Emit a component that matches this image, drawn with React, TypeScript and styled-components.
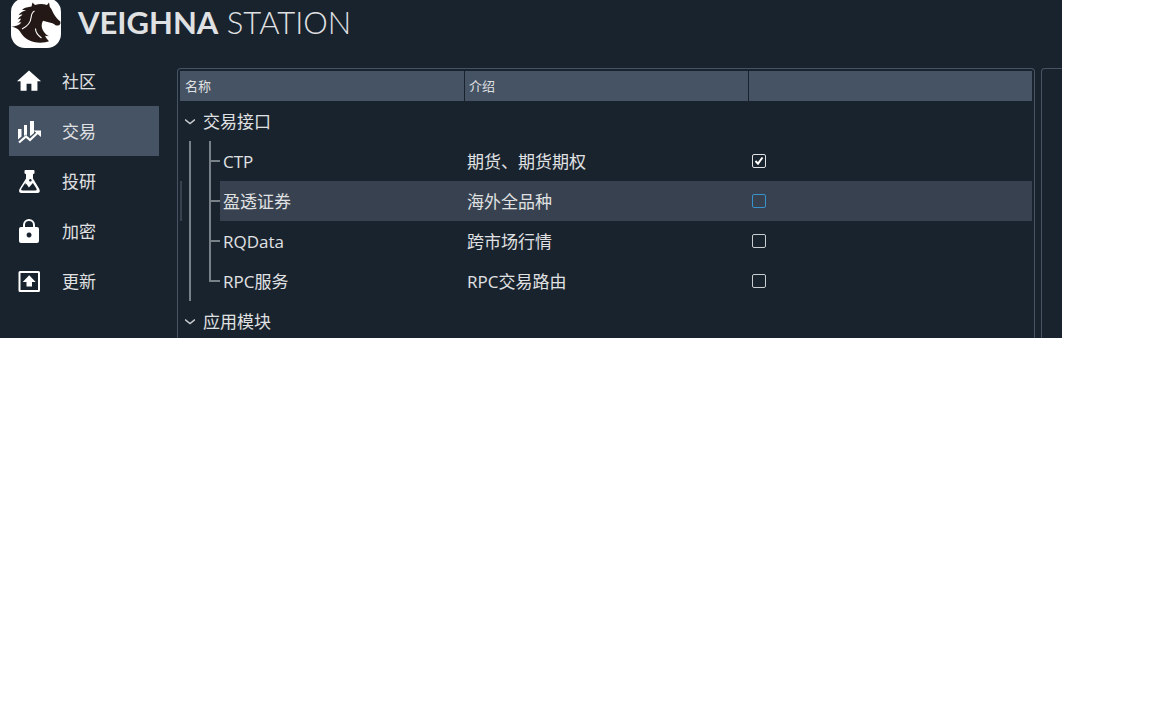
import React from 'react';
import styled, { createGlobalStyle, css } from 'styled-components';

const GlobalStyle = createGlobalStyle`
  body {
    margin: 0;
    background: #ffffff;
    color: #e0e1e3;
    font-family: "Open Sans", "Noto Sans CJK SC", sans-serif;
    font-size: 17px;
  }
`;

const Shell = styled.div`
  margin-right: 90px;
  background: #19232d;
`;

const Header = styled.header`
  display: flex;
  align-items: flex-start;
  gap: 17px;
  height: 56px;
  padding-left: 11px;
`;

const Logo = styled.svg`
  display: block;
  width: 50px;
  height: 48px;
`;

const Title = styled.h1`
  margin: 0;
  font-family: Lato, sans-serif;
  font-size: 31px;
  line-height: 44px;
  font-weight: 300;
  white-space: nowrap;
`;

const Strong = styled.span`
  font-weight: 700;
`;

const Body = styled.div`
  display: flex;
`;

const Sidebar = styled.nav`
  display: flex;
  flex: none;
  flex-direction: column;
  width: 150px;
  padding: 0 18px 0 9px;
`;

const NavButton = styled.button<{ $active?: boolean }>`
  display: flex;
  align-items: center;
  gap: 20px;
  height: 50px;
  padding: 0 7px;
  border: 0;
  background: ${(p) => (p.$active ? '#455364' : 'transparent')};
  color: inherit;
  font: inherit;
`;

const NavLabel = styled.span`
  padding-top: 2px;
  line-height: 24px;
`;

const NavIcon = styled.svg`
  flex: none;
  width: 26px;
  height: 26px;
  fill: #ffffff;
`;

const Panels = styled.main`
  display: flex;
  flex: 1;
  gap: 6px;
  min-width: 0;
  padding-top: 12px;
`;

const frame = css`
  border: 1px solid #455364;
  border-bottom: 0;
`;

const TreePanel = styled.section`
  ${frame}
  flex: 1;
  min-width: 0;
  padding: 2px 2px 0;
  border-radius: 4px 4px 0 0;
`;

const SidePanel = styled.aside`
  ${frame}
  flex: none;
  width: 20px;
  border-right: 0;
  border-radius: 4px 0 0 0;
`;

const Tree = styled.table`
  width: 100%;
  table-layout: fixed;
  border-collapse: separate;
  border-spacing: 0;
`;

const HeadCell = styled.th`
  height: 30px;
  padding: 0 5px;
  background: #455364;
  font-size: 13px;
  font-weight: inherit;
  line-height: 20px;
  text-align: left;

  & + & {
    padding: 0 4px;
    border-left: 1px solid #19232d;
  }
`;

const Row = styled.tr<{ $selected?: boolean }>`
  background: ${(p) => (p.$selected ? '#37414f' : 'transparent')};
`;

const Cell = styled.td`
  height: 38px;
  padding: 2px 3px 0;
  line-height: 24px;
  white-space: nowrap;
`;

const CheckCell = styled.td`
  padding: 0 4px;
`;

const NameCell = styled.td`
  padding: 0;
`;

const Node = styled.div`
  display: flex;
  align-items: center;
  height: 40px;
  background: #19232d;
`;

const NodeLabel = styled.span<{ $selected?: boolean }>`
  flex: 1;
  padding: 9px 3px 7px;
  line-height: 24px;
  background: ${(p) => (p.$selected ? '#37414f' : 'transparent')};
`;

const Branch = styled.svg`
  flex: none;
  width: 40px;
  height: 40px;
`;

const GroupCell = styled.td<{ $last?: boolean }>`
  height: ${(p) => (p.$last ? 32 : 39)}px;
  padding: ${(p) => (p.$last ? 5 : 1)}px 0 0;
  vertical-align: middle;
`;

const GroupButton = styled.button`
  display: flex;
  align-items: center;
  gap: 8px;
  padding: 0 5px;
  border: 0;
  background: transparent;
  color: inherit;
  font: inherit;
  line-height: 24px;
`;

const Chevron = styled.svg`
  width: 10px;
  height: 10px;
  fill: none;
  stroke: #c9cdd0;
  stroke-width: 1.500;
`;

const Tick = styled.input<{ $hot?: boolean }>`
  appearance: none;
  display: block;
  width: 14px;
  height: 14px;
  margin: 0;
  border: 1px solid ${(p) => (p.$hot ? '#3a92cc' : '#c9cdd0')};
  border-radius: 2px;

  &:checked {
    border-color: #e0e1e3;
    background: url("data:image/svg+xml,%3Csvg xmlns='http://www.w3.org/2000/svg' viewBox='0 0 12 12'%3E%3Cpath d='M2.500 6 5 8.600 9.500 2.500' fill='none' stroke='white' stroke-width='2'/%3E%3C/svg%3E");
  }
`;

const HomeIcon = () => (
  <NavIcon viewBox="1.200 1 21.600 21.600"><path d="M10 20v-6h4v6h5v-8h3L12 3 2 12h3v8z" /></NavIcon>
);
const ChartIcon = () => (
  <NavIcon viewBox="0 0 26 26">
    <path d="M2 11h3.500v7.500L2 21.500zM8 7h3v10.500l-1-1-2 1.500zM14 3h4v12l-3.500 3-.5-.5zM17.500 12.500H25V19z" />
    <path d="M3 24.500 10 18.500 14 22 23 13.500" fill="none" stroke="#fff" strokeWidth="2.200" />
  </NavIcon>
);
const FlaskIcon = () => (
  <NavIcon viewBox="0 0 26 26">
    <path
      fillRule="evenodd"
      d="M9.500 2h8q1 0 1 1v2q0 1-1.500 1v4.500l6.300 10.500q1.500 4-2 4H5.500q-3.500 0-2-4L10 10.500V6q-1.500 0-1.500-1V3q0-1 1-1zM9.500 14.500 5.500 20.500q-1 1.900 1 1.900h13.200q1.700 0 .7-1.900l-3.500-5.500-4 4.500-2.400-3.500-1 .5zM14.300 11a1.300 1.300 0 1 0 .1 0z"
    />
  </NavIcon>
);
const LockIcon = () => (
  <NavIcon viewBox="0 0 26 26">
    <path fillRule="evenodd" d="M7 9V7a6 6 0 0 1 12 0v2h2q2 0 2 2v12q0 2-2 2H5q-2 0-2-2V11q0-2 2-2zM9 9h8V7a4 4 0 0 0-8 0zM13 14.500a2.500 2.500 0 1 0 .1 0z" />
  </NavIcon>
);
const UpdateIcon = () => (
  <NavIcon viewBox="0 0 26 26">
    <path fillRule="evenodd" d="M4 3h18.500q1.500 0 1.500 1.500v18q0 1.500-1.500 1.500H4q-1.500 0-1.500-1.500v-18Q2.500 3 4 3zM4.500 5v17H22V5zM13.200 7.200l6.500 6.800h-3.700v4.500h-5.500V14H6.700z" />
  </NavIcon>
);

const NAV = [
  { label: '社区', Icon: HomeIcon },
  { label: '交易', Icon: ChartIcon, active: true },
  { label: '投研', Icon: FlaskIcon },
  { label: '加密', Icon: LockIcon },
  { label: '更新', Icon: UpdateIcon },
];

const GATEWAYS = [
  { name: 'CTP', intro: '期货、期货期权', checked: true },
  { name: '盈透证券', intro: '海外全品种', selected: true },
  { name: 'RQData', intro: '跨市场行情' },
  { name: 'RPC服务', intro: 'RPC交易路由', last: true },
];

function Group({ label, last }: { label: string; last?: boolean }) {
  return (
    <tr>
      <GroupCell colSpan={3} $last={last}>
        <GroupButton type="button" aria-expanded>
          <Chevron viewBox="0 0 10 10"><path d="M0 2.500 5 6.500 10 2.500" /></Chevron>
          {label}
        </GroupButton>
      </GroupCell>
    </tr>
  );
}

export default function App() {
  return (
    <Shell>
      <GlobalStyle />
      <Header>
        <Logo viewBox="0 0 50 48" aria-hidden>
          <rect y="-2" width="50" height="50" rx="14" fill="#fff" />
          <path
            fill="#231815"
            d="M21.500 2.500 24 5c4-1.500 8-1.500 12 0l2-2.500 .8 4.500c2 2 2.500 4 4 7 2 3.500 4 5.500 6.500 7.500q.7 2-.8 3.500-2 1-4 .3c-2-2.300-4-2.300-7-3l-5.500-1.500c-2 4-1.500 7 .5 10.500 2 3 3.500 4 5.500 5l-4-.5c1 2 2 3.500 4 5.500-3 1.500-10 2-15 .8C15.500 40 12.500 37 9 31.500 7 28.500 4 27.500.5 26.800c4-.3 8-1.500 10-4.500-1.500 0-3 .2-4.500 1 2-1 3-2.500 4-4.500-1.500 0-2.500.3-3.500 1 1.500-2 2.500-3.500 5-5-1-.5-2.500-.3-4 .5 2-3 4.500-4.500 7.500-4.500-1-.8-2-1-4-.7C14 7 17 7.500 20.500 6.500z"
          />
          <path d="M23.500 11c-2 1-3 3-3.300 6-.5 5-4 9.500-9.200 12M24.500 28.500c0 3.500 1.800 6.500 6 9.500" fill="none" stroke="#fff" strokeWidth="1.100" />
        </Logo>
        <Title><Strong>VEIGHNA</Strong> STATION</Title>
      </Header>
      <Body>
        <Sidebar>
          {NAV.map(({ label, Icon, active }) => (
            <NavButton key={label} type="button" $active={active}>
              <Icon />
              <NavLabel>{label}</NavLabel>
            </NavButton>
          ))}
        </Sidebar>
        <Panels>
          <TreePanel>
            <Tree>
              <thead>
                <tr>
                  <HeadCell>名称</HeadCell>
                  <HeadCell>介绍</HeadCell>
                  <HeadCell aria-label="启用" />
                </tr>
              </thead>
              <tbody>
                <Group label="交易接口" />
                {GATEWAYS.map((g) => (
                  <Row key={g.name} $selected={g.selected}>
                    <NameCell>
                      <Node>
                        <Branch viewBox="0 0 40 40" aria-hidden>
                          {g.selected && <path d="M1 0V40" stroke="#37414f" strokeWidth="2" />}
                          <path d={g.last ? 'M10 0V40M30 0V20H40' : 'M10 0V40M30 0V40M30 20H40'} fill="none" stroke="#788088" strokeWidth="2" />
                        </Branch>
                        <NodeLabel $selected={g.selected}>{g.name}</NodeLabel>
                      </Node>
                    </NameCell>
                    <Cell>{g.intro}</Cell>
                    <CheckCell>
                      <Tick type="checkbox" defaultChecked={g.checked} $hot={g.selected} aria-label={g.name} />
                    </CheckCell>
                  </Row>
                ))}
                <Group label="应用模块" last />
              </tbody>
            </Tree>
          </TreePanel>
          <SidePanel />
        </Panels>
      </Body>
    </Shell>
  );
}
